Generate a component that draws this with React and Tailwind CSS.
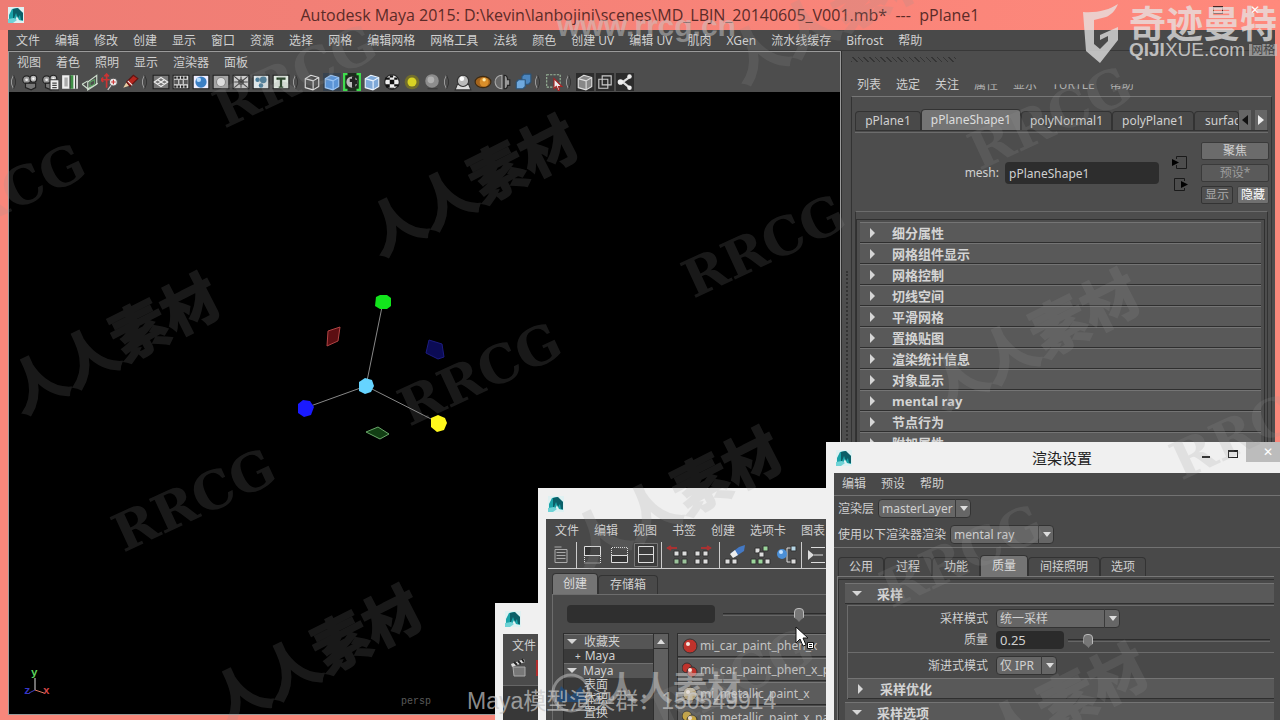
import { useState } from "react";

const mainMenu = [
  "文件", "编辑", "修改", "创建", "显示", "窗口", "资源", "选择", "网格", "编辑网格",
  "网格工具", "法线", "颜色", "创建 UV", "编辑 UV", "肌肉", "XGen", "流水线缓存", "Bifrost", "帮助",
];
const panelMenu = ["视图", "着色", "照明", "显示", "渲染器", "面板"];
const attrSections = [
  "细分属性", "网格组件显示", "网格控制", "切线空间", "平滑网格", "置换贴图",
  "渲染统计信息", "对象显示", "mental ray", "节点行为", "附加属性",
];
const shaders = [
  { name: "mi_car_paint_phen_x", color: "#c0332c" },
  { name: "mi_car_paint_phen_x_passes", color: "#c0332c", twin: true },
  { name: "mi_metallic_paint_x", color: "#b3a27c" },
  { name: "mi_metallic_paint_x_passes", color: "#c9a640", twin: true },
];
const watermarks = [
  { text: "RRCG", place: "left-[-88px] top-[163px]" },
  { text: "RRCG", place: "left-[102px] top-[468px]" },
  { text: "RRCG", place: "left-[388px] top-[342px]" },
  { text: "RRCG", place: "left-[672px] top-[214px]" },
  { text: "RRCG", place: "left-[203px] top-[44px]" },
  { text: "RRCG", place: "left-[958px] top-[86px]" },
  { text: "RRCG", place: "left-[870px] top-[524px]" },
  { text: "RRCG", place: "left-[1160px] top-[396px]" },
  { text: "RRCG", place: "left-[640px] top-[648px]" },
  { text: "人人素材", place: "left-[356px] top-[150px]" },
  { text: "人人素材", place: "left-[-2px] top-[308px]" },
  { text: "人人素材", place: "left-[200px] top-[620px]" },
  { text: "人人素材", place: "left-[918px] top-[304px]" },
  { text: "人人素材", place: "left-[560px] top-[462px]" },
  { text: "人人素材", place: "left-[718px] top-[-22px]" },
  { text: "人人素材", place: "left-[926px] top-[678px]" },
];

const MayaLogo = () => (
  <svg className="w-4 h-4 shrink-0" viewBox="0 0 16 16" aria-hidden="true">
    <path d="M0 0h16v16H0z" fill="#dff1f2" />
    <path d="M1 8 4 2l5-1 6 5v8l-4-1-2-4-2 4-6 1z" fill="#1aa3a8" />
    <path d="M5 2l5-1 5 5v7h-2l-1-5-2 3-2-5-2 5H5z" fill="#0b5f68" />
    <path d="M0 12l6-1 3 2-4 3H0z" fill="#6fd3d6" />
  </svg>
);

const Menu = ({ items, className = "" }) => (
  <nav className={`flex items-center gap-[15px] whitespace-nowrap ${className}`}>
    {items.map((item, i) => (
      <button key={i} className="leading-4">{item}</button>
    ))}
  </nav>
);

const Handle = () => (
  <svg className="w-[11px] h-4 shrink-0" viewBox="0 0 11 16" fill="none">
    <path d="M4.500 1 2.500 6v4l2 5" stroke="#999" />
    <path d="M4.500 1l2 5v4l-2 5" stroke="#333" />
  </svg>
);

const Camera = () => (
  <g>
    <circle cx="5" cy="6" r="3.500" fill="#999" stroke="#222" />
    <circle cx="11" cy="5" r="3" fill="#bbb" stroke="#222" />
    <path d="M4 9h9v4l-4 2-5-2z" fill="#777" stroke="#222" />
    <circle cx="5" cy="6" r="1.200" fill="#eee" />
    <circle cx="11" cy="5" r="1" fill="#fff" />
  </g>
);

const CubeLines = ({ fill = "none", stroke = "#ddd" }) => (
  <g fill={fill} stroke={stroke} strokeLinejoin="round">
    <path d="M2 5l5-3 7 2v8l-5 3-7-2z" />
    <path d="M2 5l7 2 5-3M9 7v8" />
  </g>
);

const Tile = ({ fill = "#ddd", children }) => (
  <g>
    <path d="M1 2h14v12H1z" fill={fill} stroke="#222" />
    {children}
  </g>
);

const drawings = {
  camera: <Camera />,
  cameraList: (
    <g><Camera /><path d="M8 6h8v9H8z" fill="#eee" stroke="#333" /><path d="M10 9h4M10 11h4M10 13h4" stroke="#444" /></g>
  ),
  book: (
    <g><path d="M1 2h14v12H1z" fill="#eee" /><path d="M8 2h3v12H8z" fill="#3f8f46" /><path d="M13 2v12" stroke="#333" /><path d="M3 4h3v8H3z" fill="#aaa" /><path d="M8 2v12" stroke="#333" /></g>
  ),
  plane: (
    <g fill="none" stroke="#cfe0cf"><path d="M6 8l8-6v8l-8 5z" /><path d="M1 10l5 4 9-5" /><path d="M8 8l4-2v4l-4 2z" stroke="#5b9f62" /><path d="M1 10l5-3" /></g>
  ),
  zoomPan: (
    <g fill="none"><path d="M5 1v12M0 6h10M3 3l2-2 2 2M2 4 0 6l2 2" stroke="#c33" strokeWidth="1.500" /><circle cx="11" cy="8" r="3.500" fill="#eee" stroke="#555" /><path d="M9 8h4M11 6v4" stroke="#c33" /><path d="M9 11l-3 4" stroke="#ccc" /></g>
  ),
  pencil: (
    <g><path d="M2 13l3-5 3 3z" fill="#e8cfa5" /><path d="M5 8l6-6 4 3-7 7z" fill="#b5271f" stroke="#5e1512" /><path d="M6 7l4 4" stroke="#eee" /></g>
  ),
  grid: <Tile fill="#777"><path d="M2 8l6-4 6 4-6 4zM5 6l6 4M11 6l-6 4" fill="none" stroke="#eee" /></Tile>,
  film: <Tile fill="#ddd"><path d="M2 6h12v4H2z" fill="#555" /><path d="M2 4h12M2 12h12" stroke="#222" strokeWidth="2" strokeDasharray="2 1" /><path d="M6 6v4M10 6v4" stroke="#ddd" /></Tile>,
  blueBall: <Tile fill="#eef"><circle cx="8" cy="8" r="5" fill="#3b7fc4" /><circle cx="6" cy="6" r="2" fill="#b7dcff" /></Tile>,
  greyBall: <Tile fill="#a5a5a5"><circle cx="8" cy="8" r="4" fill="#ddd" stroke="#888" /></Tile>,
  cross: <Tile fill="#ccc"><path d="M2 3l12 10M14 3 2 13M8 3v10M2 8h12" stroke="#444" /><circle cx="8" cy="8" r="2" fill="none" stroke="#444" /></Tile>,
  bubbles: <Tile fill="#dfe7ea"><circle cx="5" cy="6" r="2" fill="#477b99" /><circle cx="10" cy="6" r="3" fill="#477b99" /><circle cx="8" cy="11" r="2" fill="#477b99" /></Tile>,
  letter: <Tile fill="#dfe8df"><path d="M4 4h8v2H9v6h1v1H6v-1h1V6H4z" fill="#1d3a1d" /></Tile>,
  wireCube: <CubeLines />,
  blueCube: <g><path d="M0 0h16v16H0z" fill="#38434f" /><CubeLines fill="#5b94d6" stroke="#9cc6f5" /></g>,
  texCube: (
    <g><path d="M0 0h16v16H0z" fill="#1d2b1d" /><circle cx="8" cy="8" r="5" fill="#bbb" /><path d="M8 3h3v3h2v4h-2v3H8V8H6V5h2z" fill="#222" /><path d="M4 1H1v14h3M12 1h3v14h-3" fill="none" stroke="#3fdc4d" strokeWidth="2" /></g>
  ),
  lightCube: <CubeLines fill="#7fa9d8" stroke="#eaf4ff" />,
  checker: (
    <g><circle cx="8" cy="8" r="6.500" fill="#eee" stroke="#222" /><path d="M6 6h4v4H6zM2 4h4v2H2zM10 4h3v2h-3zM6 2h3v2H6zM2 10h4v3H3zM10 10h4v2h-4zM6 13h4v1H6z" fill="#111" /></g>
  ),
  yellowLight: <g><circle cx="8" cy="8" r="6.500" fill="#807a1e" fillOpacity=".7" /><circle cx="8" cy="8" r="4" fill="#d8d224" /></g>,
  shadowBall: <g><circle cx="8" cy="7" r="6" fill="#8d8d8d" /><circle cx="7" cy="6" r="3" fill="#b0b0b0" /><path d="M4 14h9" stroke="#3a3a3a" /></g>,
  dome: <g><path d="M1 15 3 10h10l2 5z" fill="#ddd" stroke="#333" /><circle cx="8" cy="7" r="5" fill="#bbb" stroke="#333" /><circle cx="7" cy="5" r="2" fill="#fff" /></g>,
  orange: <g><ellipse cx="8" cy="8" rx="7" ry="5" fill="#a5641c" stroke="#3d2a12" /><ellipse cx="9" cy="8" rx="4" ry="4" fill="#d98e2a" /><circle cx="9" cy="6" r="1.500" fill="#ffe9a8" /></g>,
  halfBall: <g><path d="M7 2a6 6 0 0 0 0 12z" fill="#666" stroke="#aaa" /><path d="M9 2v12c3 0 3-3 3-3h2V6h-2S12 2 9 2z" fill="#999" stroke="#222" /></g>,
  blueSteps: <g stroke="#2d5478" strokeLinejoin="round"><path d="M7 3l2-2h6v7l-2 2H7z" fill="#4b86bf" /><path d="M2 8l2-2h6v6l-2 2H2z" fill="#6fa9de" /></g>,
  marquee: <g><path d="M1.500 1.500h12v11h-12z" fill="none" stroke="#9ab79a" strokeDasharray="2 1" /><path d="M8 5v9l2-2 2 4 1-1-1-3h3z" fill="#eee" stroke="#a22" /></g>,
  darkCube: <g><path d="M0 0h16v16H0z" fill="#2c2c2c" /><CubeLines fill="#888" /></g>,
  squares: <g><path d="M0 0h16v16H0z" fill="#2c2c2c" /><path d="M2.500 5.500h8v8h-8zM5.500 2.500h8v8h-8z" fill="none" stroke="#ccc" /></g>,
  share: <g><path d="M0 0h16v16H0z" fill="#2c2c2c" /><path d="M13 3 6 8l6 5M2 8h5" stroke="#ddd" strokeWidth="2" fill="none" /><circle cx="4" cy="8" r="2.500" fill="#eee" /><circle cx="12" cy="3" r="2" fill="#eee" /><circle cx="12" cy="13" r="2" fill="#eee" /></g>,
};

const toolGroups = [
  ["camera", "cameraList", "book", "plane", "zoomPan", "pencil"],
  ["grid", "film", "blueBall", "greyBall", "cross", "bubbles", "letter"],
  ["wireCube", "blueCube", "texCube", "lightCube", "checker", "yellowLight", "shadowBall"],
  ["dome", "orange", "halfBall", "blueSteps"],
  ["marquee"],
  ["darkCube", "squares", "share"],
];

const ToolBar = () => (
  <div className="flex h-5 items-center">
    {toolGroups.map((group, i) => (
      <div key={i} className="flex items-center">
        <Handle />
        {group.map((name) => (
          <button key={name} aria-label={name} className="flex w-5 justify-center">
            <svg className="w-[18px] h-[18px]" viewBox="0 0 16 16">{drawings[name]}</svg>
          </button>
        ))}
      </div>
    ))}
  </div>
);

const Viewport = () => (
  <div className="relative flex-1 bg-black overflow-hidden">
    <svg className="absolute left-0 top-0" width="480" height="360" viewBox="9 92 480 360">
      <path d="M366 386 383 302M366 386l-61 22M366 386l73 37" stroke="#888" strokeWidth="1" />
      <path d="M376 297l4-2h7l4 3v8l-4 3h-7l-5-3z" fill="#12e41c" />
      <path d="M359 382l6-4 7 2 2 6-3 6-6 2-6-3z" fill="#66d4ff" />
      <path d="M298 404l5-4 7 1 4 6-3 8-7 2-6-4z" fill="#1a1aff" />
      <path d="M431 418l7-3 7 3 2 5-3 7-7 2-6-5z" fill="#fff81c" />
      <path d="M328 331l12-4-2 14-11 5z" fill="#5c0e12" stroke="#b04444" />
      <path d="M429 340l13 4 2 13-6 2-12-6z" fill="#0b0b55" stroke="#1c1c80" />
      <path d="M366 432l12-5 11 7-9 5z" fill="#123f14" stroke="#69a869" />
    </svg>
    <svg className="absolute left-[14px] bottom-4" width="30" height="30" viewBox="0 0 30 30" fontFamily="Liberation Mono" fontSize="11" fontWeight="bold">
      <path d="M12 10v12" stroke="#ddd" />
      <path d="M12 22l9 3" stroke="#e07a5c" />
      <path d="M12 22l-6 3" stroke="#4040c0" />
      <text x="8" y="8" fill="#5cd65c">y</text>
      <text x="20" y="26" fill="#d84848">x</text>
      <text x="1" y="26" fill="#3636c8">z</text>
    </svg>
    <span className="absolute left-[392px] bottom-1 font-['Liberation_Mono',monospace] text-[10px] leading-4 text-[#5a5a5a]">persp</span>
  </div>
);

const Triangle = ({ open }) => (
  <svg className="w-[10px] h-[10px] shrink-0" viewBox="0 0 10 10">
    <path d={open ? "M0 2h10L5 7z" : "M3 0v10l5-5z"} fill="#d6d6d6" />
  </svg>
);

const Section = ({ title, open }) => (
  <button className="flex w-full h-[21px] items-center gap-[15px] border-t border-t-[#747474] border-b border-b-[#2f2f2f] bg-[#595959] pl-[7px] text-[13px] font-bold text-[#d4d4d4]">
    <Triangle open={open} />
    <span className="leading-4">{title}</span>
  </button>
);

const Tab = ({ active, className = "", children }) => (
  <button
    className={`overflow-hidden whitespace-nowrap rounded-t-sm border border-b-0 border-[#333] leading-4 ${active ? "h-[21px] bg-[#747474] text-[#dcdcdc]" : "h-[19px] bg-[#494949]"} ${className}`}
  >
    {children}
  </button>
);

const NodeIcon = ({ out }) => (
  <svg className="w-[18px] h-4" viewBox="0 0 18 16" fill="none" stroke="#1a1a1a">
    {out ? <path d="M13.500 5V2.500h-10v12h10V12" /> : <path d="M5.500 5V2.500h10v12h-10V11" />}
    <path d={out ? "M10 5v7l7-3.500z" : "M1 5v7l7-3.500z"} fill="#000" stroke="none" />
  </svg>
);

const AttributeEditor = () => (
  <aside className="flex w-[434px] shrink-0 bg-[#4d4d4d] border-l border-[#2e2e2e]">
    <div className="flex w-[9px] shrink-0 justify-center pt-[220px]">
      <div className="w-0 border-l-2 border-dotted border-[#333]" />
    </div>
    <div className="flex flex-1 min-w-0 flex-col pr-[3px]">
      <div className="flex h-6 pt-1.5">
        <div className="h-[5px] w-[105px] bg-[repeating-linear-gradient(45deg,#353535_0_1px,#4d4d4d_1px_4px)]" />
      </div>
      <div className="flex h-[21px] items-center gap-[15px] px-1.5 pb-px whitespace-nowrap">
        <Menu items={["列表", "选定", "关注"]} />
        <Menu items={["属性", "显示", "TURTLE", "帮助"]} className="text-[#b0b0b0] [clip-path:inset(45%_0_0_0)]" />
      </div>
      <div className="flex flex-1 flex-col border border-[#333] border-t-[#777] min-h-0">
        <div className="flex h-[33px] items-end pl-[3px] shrink-0">
          <Tab className="w-[66px]">pPlane1</Tab>
          <Tab active className="w-[100px]">pPlaneShape1</Tab>
          <Tab className="w-[91px]">polyNormal1</Tab>
          <Tab className="w-[82px]">polyPlane1</Tab>
          <Tab className="flex-1 min-w-0 pl-2.5 text-left">surfac</Tab>
          <div className="flex gap-1 pr-1">
            <button aria-label="上一个" className="flex h-5 w-3 items-center justify-center bg-[#666]">
              <svg width="6" height="10" viewBox="0 0 6 10"><path d="M6 0v10L0 5z" fill="#111" /></svg>
            </button>
            <button aria-label="下一个" className="flex h-5 w-3 items-center justify-center bg-[#666]">
              <svg width="6" height="10" viewBox="0 0 6 10"><path d="M0 0v10l6-5z" fill="#eee" /></svg>
            </button>
          </div>
        </div>
        <div className="mx-[3px] h-[3px] shrink-0 border-y border-y-[#333] border-b-[#6c6c6c]" />
        <div className="flex h-[78px] shrink-0 items-center justify-end gap-3 pr-0.5 pt-0.5">
          <div className="flex items-center gap-1.5">
            <label htmlFor="mesh">mesh:</label>
            <input id="mesh" defaultValue="pPlaneShape1" className="h-[22px] w-[154px] rounded-sm bg-[#2d2d2d] px-1 outline-none" />
          </div>
          <div className="flex flex-col gap-1.5">
            <NodeIcon />
            <NodeIcon out />
          </div>
          <div className="grid w-[68px] grid-cols-2 gap-1 leading-4">
            <button className="col-span-2 h-[18px] rounded-xs border border-[#3a3a3a] bg-[#6b6b6b]">聚焦</button>
            <button className="col-span-2 h-[18px] rounded-xs border border-[#3a3a3a] bg-[#5a5a5a] text-[#9c9c9c]">预设*</button>
            <button className="h-[18px] rounded-xs border border-[#333] bg-[#505050] text-[#a8a8a8]">显示</button>
            <button className="h-[18px] rounded-xs border border-[#444] bg-[#707070] text-white">隐藏</button>
          </div>
        </div>
        <div className="mx-[3px] flex-1 min-h-0 overflow-hidden border border-b-0 border-[#333] border-t-[#6c6c6c] pt-[7px] pr-0.5">
          <div className="border border-b-0 border-[#303030] pl-[3px] pr-[3px] pt-0.5">
            {attrSections.map((title) => <Section key={title} title={title} />)}
          </div>
        </div>
      </div>
    </div>
  </aside>
);

const Dropdown = ({ id, value, className }) => (
  <div className={`relative ${className}`}>
    <select id={id} defaultValue={value} className="block h-[19px] w-full appearance-none rounded-sm border border-[#333] bg-[#666] px-[3px] leading-4 text-[#d0d0d0] outline-none">
      <option>{value}</option>
    </select>
    <span className="pointer-events-none absolute right-0 top-0 flex h-[19px] w-4 items-center justify-center border-l border-[#3a3a3a]">
      <svg width="8" height="5" viewBox="0 0 8 5"><path d="M0 0h8L4 5z" fill="#ddd" /></svg>
    </span>
  </div>
);

const Slider = ({ label, value, onChange, className }) => (
  <input
    type="range"
    aria-label={label}
    value={value}
    onChange={(e) => onChange(Number(e.target.value))}
    className={`h-4 appearance-none bg-transparent [&::-webkit-slider-runnable-track]:h-[3px] [&::-webkit-slider-runnable-track]:border-y [&::-webkit-slider-runnable-track]:border-t-[#2c2c2c] [&::-webkit-slider-runnable-track]:border-b-[#666] [&::-webkit-slider-thumb]:mt-[-6px] [&::-webkit-slider-thumb]:h-3.5 [&::-webkit-slider-thumb]:w-2.5 [&::-webkit-slider-thumb]:appearance-none [&::-webkit-slider-thumb]:rounded-sm [&::-webkit-slider-thumb]:border [&::-webkit-slider-thumb]:border-[#bbb] [&::-webkit-slider-thumb]:bg-[#777] [&::-webkit-slider-thumb]:[clip-path:polygon(0_0,100%_0,100%_70%,50%_100%,0_70%)] ${className}`}
  />
);

const RenderSettings = () => {
  const [quality, setQuality] = useState(8);

  return (
    <section className="absolute left-[826px] top-[442px] w-[472px] h-[320px] flex flex-col bg-[#f0f0f0] px-2">
      <header className="flex h-[31px] shrink-0 items-center text-[#222]">
        <div className="flex w-[100px] pl-0.5"><MayaLogo /></div>
        <h2 className="flex-1 text-center text-[15px] leading-5">渲染设置</h2>
        <div className="flex w-[100px] items-center self-start h-6 pl-3">
          <span className="mt-1.5 h-0.5 w-2 bg-[#222]" />
          <span className="ml-[18px] h-2 w-2.5 border border-t-2 border-[#222]" />
          <button aria-label="关闭" className="ml-2 flex h-5 flex-1 items-center self-start bg-[#bcbcbc] pl-[17px] text-[12px] text-white">✕</button>
        </div>
      </header>
      <div className="flex flex-1 min-h-0 flex-col overflow-hidden bg-[#494949]">
        <Menu items={["编辑", "预设", "帮助"]} className="h-[22px] shrink-0 pl-2" />
        <div className="flex h-[53px] shrink-0 flex-col gap-[7px] border-y border-[#727272] pl-1 pt-[3px] whitespace-nowrap">
          <div className="flex items-center gap-1">
            <label htmlFor="layer">渲染层</label>
            <Dropdown id="layer" value="masterLayer" className="w-[93px]" />
          </div>
          <div className="flex items-center gap-1">
            <label htmlFor="renderer">使用以下渲染器渲染</label>
            <Dropdown id="renderer" value="mental ray" className="w-[104px]" />
          </div>
        </div>
        <div className="flex h-[28px] shrink-0 items-end pl-1">
          <Tab className="w-[46px]">公用</Tab>
          <Tab className="w-12">过程</Tab>
          <Tab className="w-12">功能</Tab>
          <Tab active className="w-12">质量</Tab>
          <Tab className="w-[72px]">间接照明</Tab>
          <Tab className="w-[46px]">选项</Tab>
        </div>
        <div className="ml-[3px] mr-4 flex-1 border-l border-t border-[#777] pt-0.5">
          <div className="border-l border-t border-[#2f2f2f] pl-1.5 pt-[3px]">
            <Section title="采样" open />
            <div className="ml-0.5 mt-px border-l border-t border-[#6c6c6c]">
              <div className="grid grid-cols-[140px_1fr] items-center gap-x-2 gap-y-[3px] border-b border-[#6c6c6c] py-[3px]">
                <label htmlFor="mode" className="text-right">采样模式</label>
                <Dropdown id="mode" value="统一采样" className="w-[124px]" />
                <label htmlFor="quality" className="text-right">质量</label>
                <div className="flex items-center gap-1">
                  <input id="quality" defaultValue="0.25" className="h-[18px] w-[68px] rounded-sm bg-[#2b2b2b] px-1 text-[13px] outline-none" />
                  <Slider label="质量滑块" value={quality} onChange={setQuality} className="w-[202px]" />
                </div>
              </div>
              <div className="grid grid-cols-[140px_1fr] items-center gap-x-2 py-[3px]">
                <label htmlFor="progressive" className="text-right">渐进式模式</label>
                <Dropdown id="progressive" value="仅 IPR" className="w-[61px]" />
              </div>
              <Section title="采样优化" />
            </div>
            <div className="pt-[3px]"><Section title="采样选项" open /></div>
          </div>
        </div>
      </div>
    </section>
  );
};

const Sep = () => <span className="h-[26px] w-px bg-[#ccc]" />;

const Dots = ({ points, color = "#ddd" }) =>
  points.map(([x, y]) => <path key={`${x}-${y}`} d={`M${x} ${y}h5v5h-5z`} fill={color} stroke="#333" strokeWidth="1" />);

const HypershadeTools = () => (
  <div className="flex h-[27px] shrink-0 items-center gap-[3px] border-b border-[#ccc] ml-0.5 pl-0.5">
    <svg className="w-[23px] h-5 shrink-0" viewBox="0 0 22 20" fill="none" stroke="#aaa">
      <path d="M4.500 4.500h12v13h-12z" /><path d="M4 2h7M6 7.500h9M6 10.500h9M6 13.500h9" />
    </svg>
    <Sep />
    <svg className="w-[26px] h-5 shrink-0" viewBox="0 0 26 20" fill="none" stroke="#ddd">
      <path d="M4.500 1.500h16v9h-16z" fill="#333" /><path d="M4.500 10v8h16v-8" strokeDasharray="1 1" />
    </svg>
    <svg className="w-[22px] h-5 shrink-0" viewBox="0 0 22 20" fill="none" stroke="#ddd">
      <path d="M2.500 10V2.500h16V10" strokeDasharray="1 1" /><path d="M2.500 10.500h16v7h-16z" fill="#333" />
    </svg>
    <svg className="w-[24px] h-6 shrink-0" viewBox="0 0 24 24" fill="none" stroke="#ddd">
      <path d="M.5.5h23v23H.5z" fill="#3c3c3c" stroke="#777" /><path d="M4.500 3.500h15v16h-15zM4 11.500h16" />
    </svg>
    <Sep />
    <svg className="w-[51px] h-5 shrink-0" viewBox="0 0 51 20">
      <path d="M12 3H2m4-2L3 3l3 2M36 3h10m-4-2 3 2-3 2" fill="none" stroke="#a83232" strokeWidth="2" />
      <Dots points={[[9, 6], [17, 6], [30, 6], [38, 6]]} /><Dots points={[[9, 14], [17, 14]]} color="#9cc49c" /><Dots points={[[30, 14], [38, 14]]} />
    </svg>
    <Sep />
    <svg className="w-[24px] h-5 shrink-0" viewBox="0 0 24 20">
      <path d="M8 8l8-6 6-2-1 6-9 6z" fill="#4479c4" /><path d="M7 9l5-4 3 5-5 3z" fill="#eee" /><Dots points={[[2, 14], [9, 14]]} />
    </svg>
    <svg className="w-[22px] h-5 shrink-0" viewBox="0 0 22 20">
      <Dots points={[[13, 1], [1, 14], [8, 14]]} color="#9cd69c" /><Dots points={[[5, 3], [9, 7], [15, 14]]} />
    </svg>
    <svg className="w-[23px] h-5 shrink-0" viewBox="0 0 23 20">
      <path d="M8 9h4V3h4M12 9v8h4" fill="none" stroke="#ddd" /><circle cx="7" cy="9" r="5" fill="#4b8fd6" /><circle cx="6" cy="7" r="2" fill="#c4e2ff" />
      <Dots points={[[16, 1]]} color="#b6d6e6" /><Dots points={[[16, 14]]} />
    </svg>
    <Sep />
    <svg className="w-5 h-5 shrink-0" viewBox="0 0 20 20">
      <path d="M3 5v10l6-5z" fill="#ddd" /><path d="M20 2.500H6M6 17.500h14M9 10h9" stroke="#ddd" fill="none" />
    </svg>
  </div>
);

const ShaderBall = ({ color, twin }) => (
  <svg className="w-4 h-4 shrink-0" viewBox="0 0 16 16">
    {twin && <circle cx="5" cy="6" r="5" fill={color} stroke="#333" />}
    <circle cx={twin ? 10 : 8} cy={twin ? 10 : 8} r={twin ? 5 : 7} fill={color} stroke="#333" />
    <circle cx={twin ? 8 : 6} cy={twin ? 8 : 6} r="2" fill="#f5e8e0" />
  </svg>
);

const Hypershade = () => {
  const [size, setSize] = useState(50);

  return (
    <section className="absolute left-[538px] top-[488px] w-[400px] h-[270px] flex flex-col bg-[#f0f0f0] px-2">
      <header className="flex h-[31px] shrink-0 items-center pl-0.5"><MayaLogo /></header>
      <div className="flex flex-1 min-h-0 flex-col overflow-hidden bg-[#494949]">
        <Menu items={["文件", "编辑", "视图", "书签", "创建", "选项卡", "图表"]} className="h-[23px] shrink-0 pl-[9px]" />
        <HypershadeTools />
        <div className="flex h-[25px] shrink-0 items-end pl-1.5">
          <Tab active className="w-[46px]">创建</Tab>
          <Tab className="w-[60px]">存储箱</Tab>
        </div>
        <div className="mx-1.5 flex-1 border-l border-t border-[#6c6c6c] pl-2.5">
          <div className="flex h-[38px] items-center gap-2 pl-1">
            <input aria-label="搜索" className="h-[18px] w-[148px] rounded-sm bg-[#2f2f2f] px-1 outline-none" />
            <Slider label="图标大小" value={size} onChange={setSize} className="w-[152px]" />
          </div>
          <div className="flex gap-2">
            <div className="flex w-[106px] shrink-0 border border-[#2e2e2e] bg-[#3a3a3a] h-[100px] overflow-hidden">
              <ul className="flex-1 leading-[14px] text-[12px]">
                <li className="flex items-center gap-[7px] border-t border-[#707070] bg-[#555] pl-[3px]"><Triangle open />收藏夹</li>
                <li className="flex items-center gap-1 pl-[11px]"><span className="text-[10px]">+</span>Maya</li>
                <li className="flex items-center gap-1.5 border-t border-[#707070] bg-[#555] pl-[3px]"><Triangle open />Maya</li>
                <li className="pl-5">表面</li>
                <li className="pl-5">体积</li>
                <li className="pl-5">置换</li>
              </ul>
              <div className="w-[15px] border-l border-[#2e2e2e] bg-[#606060]">
                <button aria-label="向上滚动" className="flex h-[15px] w-full items-center justify-center border-b border-[#2e2e2e]">
                  <svg width="8" height="5" viewBox="0 0 8 5"><path d="M0 5h8L4 0z" fill="#ddd" /></svg>
                </button>
              </div>
            </div>
            <div className="flex-1 min-w-0 border-l border-t border-[#2e2e2e]">
              {shaders.map((s) => (
                <button key={s.name} className="mb-px flex h-[23px] w-full items-center gap-0.5 overflow-hidden border-y border-t-[#777] border-b-[#2c2c2c] bg-[#5c5c5c] pl-1 text-[12px] text-[#c4c4c4]">
                  <ShaderBall color={s.color} twin={s.twin} />
                  {s.name}
                </button>
              ))}
            </div>
          </div>
        </div>
      </div>
    </section>
  );
};

const RenderView = () => (
  <section className="absolute left-[495px] top-[603px] w-[300px] h-[150px] flex flex-col bg-[#f0f0f0] px-2">
    <header className="flex h-[31px] shrink-0 items-center pl-0.5"><MayaLogo /></header>
    <div className="flex-1 bg-[#4b4b4b]">
      <Menu items={["文件"]} className="h-6 pl-[9px]" />
      <div className="flex h-7 items-center border-b border-[#666] pl-[7px] pb-2">
        <svg className="w-[18px] h-5" viewBox="0 0 18 20">
          <path d="M3 9h12v9H4z" fill="#777" stroke="#aaa" /><path d="M1 6l13-5 1 3L2 9z" fill="#ddd" /><path d="M4 4l3 3M8 3l3 3M12 1l2 3" stroke="#222" strokeWidth="2" />
        </svg>
        <span className="ml-2 h-4 w-3 bg-[#b02c2c]" />
      </div>
      <div className="h-24 bg-[#383838]" />
    </div>
  </section>
);

const Overlays = () => (
  <div className="pointer-events-none absolute inset-0 overflow-hidden whitespace-nowrap">
    {watermarks.map((w, i) => (
      <span
        key={i}
        className={`absolute font-bold leading-[64px] text-[#969696] opacity-17 ${w.place} ${w.text === "RRCG" ? "-rotate-[25deg] w-[184px] text-center font-['DejaVu_Serif',serif] text-[52px]" : "-rotate-[27deg] w-[228px] font-['Noto_Sans_CJK_SC',sans-serif] text-[57px] [-webkit-text-stroke:2px_#969696]"}`}
      >
        {w.text}
      </span>
    ))}
    <span className="absolute left-[557px] top-2 font-['Liberation_Sans',sans-serif] text-[30px] leading-9 font-bold text-[#c8c8c8]/50">www.rrcg.cn</span>

    <div className="absolute left-[1083px] top-1 flex gap-2 text-[#e6e6e6]/75">
      <svg className="w-[38px] h-[60px] shrink-0" viewBox="0 0 38 60" fill="currentColor">
        <path d="M0 8c14 1 26-2 35-8-3 7-7 11-12 13L11 16v24l6 5v14L3 47z" />
        <path d="M17 31l18-8v13L17 59V45l8-8v-5l-8 4z" />
      </svg>
      <div className="flex flex-col">
        <span className="text-[37px] leading-9 font-bold font-['Noto_Sans_CJK_SC',sans-serif]">奇迹曼特</span>
        <div className="flex items-center gap-1">
          <span className="text-[19px] leading-5 font-['Liberation_Sans',sans-serif]"><b>QIJI</b>XUE.com</span>
          <span className="bg-[#c4c4c4]/60 px-0.5 text-[12px] leading-3 text-[#444]">网格</span>
        </div>
      </div>
    </div>

    <svg className="absolute left-[550px] top-[672px] w-[42px] h-[42px]" viewBox="0 0 42 42" fill="none">
      <circle cx="21" cy="21" r="18" stroke="#c8c8c8" strokeOpacity=".5" strokeWidth="3" />
      <path d="M6 30l5-16 10 10 10-10 5 16z" fill="#1b4f86" fillOpacity=".7" />
    </svg>
    <span className="absolute left-[605px] top-[668px] text-[34px] leading-10 font-bold text-[#d2d2d2]/50">人人素材</span>
    <span className="absolute left-[467px] top-[687px] font-['Liberation_Sans','Noto_Sans_CJK_SC',sans-serif] text-[23px] leading-7 text-[#c8c8c8]/70">Maya模型渲染群：150549914</span>

    <svg className="absolute left-[795px] top-[626px] w-6 h-6" viewBox="0 0 24 24">
      <path d="M1 1v16l4-4 3 7 3-1-3-7h5z" fill="#fff" stroke="#111" />
      <path d="M12.500 16.500h6v6h-6z" fill="#fff" stroke="#111" /><path d="M14 18.500h3M14 20.500h3" stroke="#111" />
    </svg>
  </div>
);

const App = () => {
  return (
    <main className="relative h-screen overflow-hidden bg-[#f8877b] font-['Noto_Sans','Noto_Sans_CJK_SC',sans-serif] text-[12px] leading-4 text-[#d0d0d0]">
      <div className="flex h-full flex-col pl-2 pr-[5px] pb-[5px]">
        <header className="-ml-2 -mr-[5px] flex h-[30px] shrink-0 items-center bg-linear-to-r from-[#ee7c74] to-[#ff897c] px-2 text-[#5b2b28]">
          <div className="w-16"><MayaLogo /></div>
          <h1 className="flex-1 text-center font-['Open_Sans',sans-serif] text-[16px] leading-5 whitespace-pre">
            {"Autodesk Maya 2015: D:\\kevin\\lanbojini\\scenes\\MD_LBJN_20140605_V001.mb*  ---  pPlane1"}
          </h1>
          <div className="flex h-5 w-16 items-center justify-end gap-[27px] self-start pr-3">
            <span className="h-2 w-2.5 border border-t-2 border-[#4a2523]" />
            <button aria-label="关闭" className="text-white">✕</button>
          </div>
        </header>
        <Menu items={mainMenu} className="h-[21px] shrink-0 border-b border-[#383838] bg-[#494949] pl-2 pt-0.5" />
        <div className="flex flex-1 min-h-0 bg-[#4d4d4d]">
          <div className="flex flex-1 min-w-0 flex-col border border-[#9a9a9a]">
            <Menu items={panelMenu} className="h-5 pl-2 pt-0.5" />
            <ToolBar />
            <Viewport />
          </div>
          <AttributeEditor />
        </div>
      </div>
      <RenderView />
      <Hypershade />
      <RenderSettings />
      <Overlays />
    </main>
  );
};

export default App;
